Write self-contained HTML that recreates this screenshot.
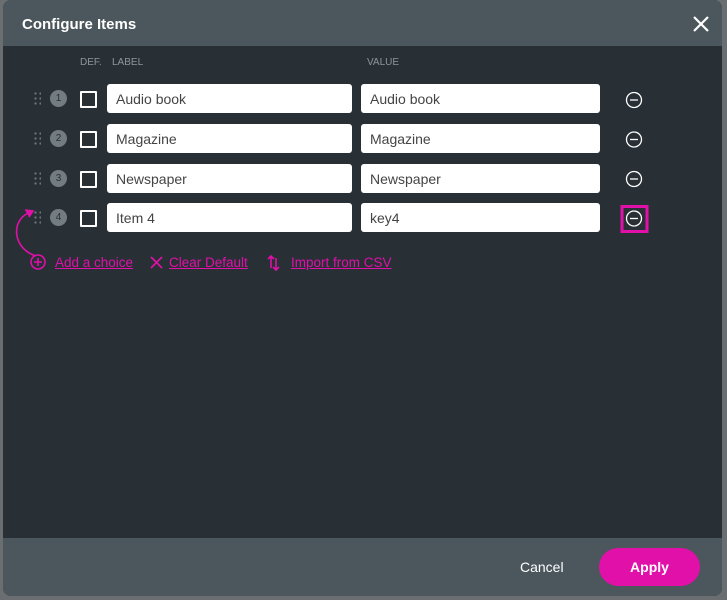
<!DOCTYPE html>
<html><head><style>
body{margin:0;width:727px;height:600px;background:#6b6e70;font-family:"Liberation Sans",sans-serif;position:relative;overflow:hidden}
.modal{position:absolute;left:3px;top:0;width:719px;height:596px;background:#283036;border-radius:8px;overflow:hidden}
.hdr{height:46px;background:#4b575c;color:#fff;font-weight:bold;font-size:15px;line-height:50px;padding-left:19px}
.ftr{position:absolute;left:0;right:0;top:538px;bottom:0;background:#4b575c}
.lbl{position:absolute;top:57px;font-size:10px;color:#8d969b}
.in{position:absolute;height:29px;background:#fff;border-radius:3px;font-size:14px;color:#444;line-height:30px;padding-left:9px;box-sizing:border-box}
.cb{position:absolute;left:77px;width:13px;height:13px;border:2px solid #fff;border-radius:1px}
.num{position:absolute;left:47px;width:17px;height:17px;border-radius:50%;background:#737c81;color:#283036;font-size:10px;text-align:center;line-height:17px}
.dots{position:absolute;left:30px;width:8px;height:14px;background-image:radial-gradient(circle,#6d767b 1px,transparent 1.3px);background-size:5px 5px}
.link{position:absolute;top:255px;color:#e010a8;font-size:13.5px;text-decoration:underline}
</style></head><body>
<div class="modal">
<div class="hdr">Configure Items</div>
<svg style="position:absolute;left:690px;top:16px" width="16" height="16"><path d="M1 1L15 15M15 1L1 15" stroke="#fff" stroke-width="2.2"/></svg>
<div class="lbl" style="left:77px">DEF.</div><div class="lbl" style="left:109px">LABEL</div><div class="lbl" style="left:364px">VALUE</div>

<div class="dots" style="top:91px"></div><div class="num" style="top:90px">1</div><div class="cb" style="top:91px"></div>
<div class="in" style="left:104px;top:84px;width:245px">Audio book</div><div class="in" style="left:358px;top:84px;width:239px">Audio book</div>
<div class="dots" style="top:131px"></div><div class="num" style="top:130px">2</div><div class="cb" style="top:131px"></div>
<div class="in" style="left:104px;top:124px;width:245px">Magazine</div><div class="in" style="left:358px;top:124px;width:239px">Magazine</div>
<div class="dots" style="top:171px"></div><div class="num" style="top:170px">3</div><div class="cb" style="top:171px"></div>
<div class="in" style="left:104px;top:164px;width:245px">Newspaper</div><div class="in" style="left:358px;top:164px;width:239px">Newspaper</div>
<div class="dots" style="top:210px"></div><div class="num" style="top:209px">4</div><div class="cb" style="top:210px"></div>
<div class="in" style="left:104px;top:203px;width:245px">Item 4</div><div class="in" style="left:358px;top:203px;width:239px">key4</div>

<svg style="position:absolute;left:0;top:0" width="719" height="300">
<g fill="none" stroke="#fff" stroke-width="1.3">
<circle cx="631" cy="100" r="7.5"/><path d="M627 100h8"/>
<circle cx="631" cy="139.5" r="7.5"/><path d="M627 139.5h8"/>
<circle cx="631" cy="179" r="7.5"/><path d="M627 179h8"/>
<circle cx="631" cy="218.5" r="7.5"/><path d="M627 218.5h8"/>
</g>
<rect x="619" y="206.5" width="25" height="25" fill="none" stroke="#e010a8" stroke-width="3"/>
<g fill="none" stroke="#e010a8" stroke-width="1.6">
<path d="M33 256C8 248 8 218 28 212"/><path d="M22 210l8 1-4 6" fill="#e010a8"/>
<circle cx="35" cy="262" r="7"/><path d="M31 262h8M35 258v8"/>
<path d="M148 257l11 11M159 257l-11 11"/>
<path d="M268 256v12M265 259l3-3 3 3M273 258v12M270 267l3 3 3-3"/>
</g>
</svg>
<div class="link" style="left:52px">Add a choice</div>
<div class="link" style="left:166px">Clear Default</div>
<div class="link" style="left:288px">Import from CSV</div>
<div class="ftr">
<div style="position:absolute;left:517px;top:21px;color:#fff;font-size:14px">Cancel</div>
<div style="position:absolute;left:596px;top:10px;width:101px;height:38px;border-radius:19px;background:#e010a8;color:#fff;font-size:14px;font-weight:bold;text-align:center;line-height:38px">Apply</div>
</div>
</div>
</body></html>
